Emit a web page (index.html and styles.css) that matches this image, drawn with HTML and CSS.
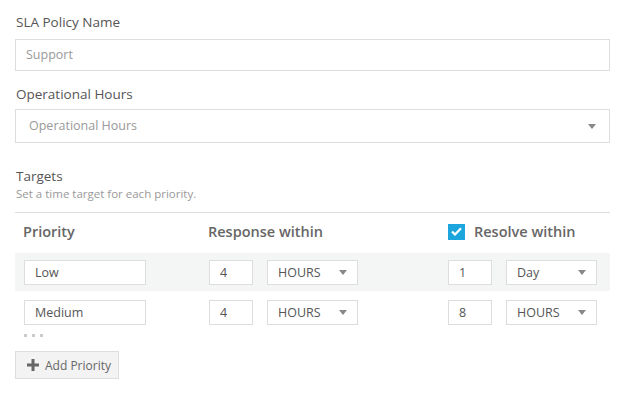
FILE: index.html
```html
<!DOCTYPE html>
<html lang="en">
<head>
    <meta charset="UTF-8">
    <title>SLA Policy</title>
    <link rel="stylesheet" href="styles.css">
</head>
<body>
    <div class="sla-form">
        <div class="field">
            <div class="field-label">SLA Policy Name</div>
            <div class="text-box placeholder">Support</div>
        </div>

        <div class="field">
            <div class="field-label tight">Operational Hours</div>
            <div class="select-box big">
                <span class="placeholder">Operational Hours</span>
                <span class="caret"></span>
            </div>
        </div>

        <div class="targets">
            <div class="field-label">Targets</div>
            <div class="field-hint">Set a time target for each priority.</div>
        </div>

        <div class="target-table">
            <div class="target-row head">
                <div>Priority</div>
                <div class="span2">Response within</div>
                <div class="span2 resolve-head">
                    <span class="check">
                        <svg width="11" height="9" viewBox="0 0 11 9"><path d="M1 4.5 L4 7.5 L10 1.2" fill="none" stroke="#fff" stroke-width="2.2"/></svg>
                    </span>
                    Resolve within
                </div>
            </div>

            <div class="target-row shaded">
                <div class="cell-box name">Low</div>
                <div class="cell-box num">4</div>
                <div class="select-box small">HOURS<span class="caret"></span></div>
                <div class="cell-box num">1</div>
                <div class="select-box small">Day<span class="caret"></span></div>
            </div>

            <div class="target-row">
                <div class="cell-box name">Medium</div>
                <div class="cell-box num">4</div>
                <div class="select-box small">HOURS<span class="caret"></span></div>
                <div class="cell-box num">8</div>
                <div class="select-box small">HOURS<span class="caret"></span></div>
            </div>
        </div>

        <div class="more-dots"><span></span><span></span><span></span></div>

        <button class="add-btn">
            <svg width="12" height="12" viewBox="0 0 12 12"><path d="M4.5 0h3v4.5H12v3H7.5V12h-3V7.5H0v-3h4.5z" fill="#666"/></svg>
            Add Priority
        </button>
    </div>
</body>
</html>
```

FILE: styles.css
```css
body {
    margin: 0;
    padding: 0;
    background: #fff;
    font-family: "Open Sans", "Liberation Sans", sans-serif;
    color: #555;
}

.sla-form {
    width: 595px;
    padding: 12px 0 0 15px;
}

.field-label {
    font-size: 13.5px;
    color: #555;
    line-height: 20px;
    padding-left: 1px;
}

.field {
    margin-bottom: 13px;
}

.field .field-label {
    margin-bottom: 7px;
}

.field .field-label.tight {
    margin-bottom: 5px;
}

.text-box,
.select-box.big {
    box-sizing: border-box;
    height: 32px;
    border: 1px solid #ddd;
    padding: 0 10px;
    font-size: 12.5px;
    line-height: 30px;
}

.select-box.big {
    height: 34px;
    line-height: 32px;
    padding: 0 13px;
    display: flex;
    justify-content: space-between;
    align-items: center;
}

.placeholder {
    color: #999;
}

.caret {
    width: 0;
    height: 0;
    border-left: 4.5px solid transparent;
    border-right: 4.5px solid transparent;
    border-top: 5px solid #888;
}

.targets {
    margin-top: 23px;
    padding-bottom: 10px;
    border-bottom: 1px solid #ddd;
}

.field-hint {
    font-size: 11.5px;
    color: #999;
    line-height: 16px;
    padding-left: 1px;
}

.target-table {
    font-size: 12.5px;
}

.target-row {
    display: grid;
    grid-template-columns: 185px 58px 181px 58px 90px;
    align-items: center;
    padding-left: 9px;
    height: 42px;
}

.target-row .span2 {
    grid-column: span 2;
}

.target-row.head {
    box-sizing: border-box;
    height: 40px;
    padding-bottom: 3px;
    font-size: 14.5px;
    font-weight: 600;
    color: #666;
}

.target-row.head > div:first-child {
    margin-left: -1px;
}

.target-row.head .span2:nth-child(2) {
    margin-left: -1px;
}

.resolve-head {
    display: flex;
    align-items: center;
    gap: 9px;
}

.check {
    width: 17px;
    height: 16px;
    background: #1da5dd;
    display: flex;
    align-items: center;
    justify-content: center;
}

.target-row.shaded {
    background: #f4f5f5;
    height: 38px;
}

.cell-box,
.select-box.small {
    box-sizing: border-box;
    height: 25px;
    border: 1px solid #ddd;
    background: #fff;
    line-height: 23px;
    padding: 0 10px;
    color: #555;
}

.cell-box.name {
    width: 122px;
}

.cell-box.num {
    width: 44px;
}

.select-box.small {
    width: 91px;
    display: flex;
    justify-content: space-between;
    align-items: center;
}

.more-dots {
    display: flex;
    gap: 5px;
    padding-left: 9px;
    height: 3px;
    margin-top: 1px;
}

.more-dots span {
    width: 3px;
    height: 3px;
    background: #ccc;
}

.add-btn {
    margin-top: 14px;
    box-sizing: border-box;
    height: 28px;
    width: 104px;
    border: 1px solid #ddd;
    background: #f3f3f3;
    font-family: inherit;
    font-size: 12px;
    color: #666;
    display: flex;
    align-items: center;
    gap: 6px;
    padding: 0 8px 0 11px;
    white-space: nowrap;
}

.add-btn svg {
    flex-shrink: 0;
}
```
